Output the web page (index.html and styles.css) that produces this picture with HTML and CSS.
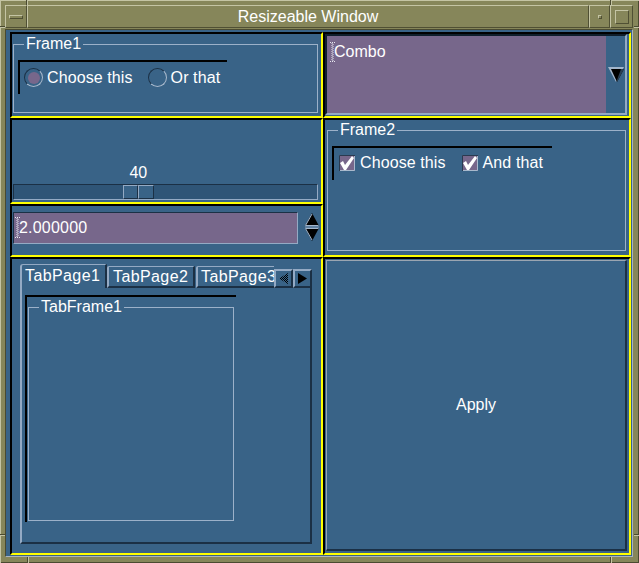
FILE: index.html
```html
<!DOCTYPE html>
<html>
<head>
<meta charset="utf-8">
<title>Resizeable Window</title>
<link rel="stylesheet" href="styles.css">
</head>
<body>
<div class="window">
  <span class="mark mv" style="left:26px;top:0;height:5px"></span>
  <span class="mark mv" style="left:610px;top:0;height:5px"></span>
  <span class="mark mv" style="left:27px;top:557px;height:6px"></span>
  <span class="mark mv" style="left:610px;top:557px;height:6px"></span>
  <span class="mark mh" style="left:0;top:26px;width:5px"></span>
  <span class="mark mh" style="left:634px;top:26px;width:5px"></span>
  <span class="mark mh" style="left:0;top:534px;width:5px"></span>
  <span class="mark mh" style="left:634px;top:534px;width:5px"></span>

  <div class="titlebar">
    <div class="tb-btn tb-menu"><span class="tb-dash"></span></div>
    <div class="tb-title">Resizeable Window</div>
    <div class="tb-btn tb-min"><span class="tb-dot"></span></div>
    <div class="tb-btn tb-max"><span class="tb-square"></span></div>
  </div>

  <div class="client">
    <div class="grid">
      <div class="cell">
        <fieldset class="frame frame1">
          <legend>Frame1</legend>
          <div class="group group-radio">
            <label class="opt opt-radio"><span class="radio on"></span>Choose this</label>
            <label class="opt opt-radio"><span class="radio"></span>Or that</label>
          </div>
        </fieldset>
      </div>

      <div class="cell">
        <div class="combo">
          <div class="combo-entry">
            <svg class="ibeam" width="5" height="20" viewBox="0 0 5 20"><path d="M0 0.5h5M0 19.5h5" stroke="#e6e6ee" stroke-dasharray="1 1"/><path d="M2 1v18" stroke="#e6e6ee" stroke-dasharray="1 1"/><path d="M3 1v18" stroke="#e6e6ee" stroke-dasharray="1 1" stroke-dashoffset="1"/></svg>
            <span>Combo</span>
          </div>
          <div class="combo-btn">
            <svg width="16" height="15" viewBox="0 0 16 15"><polygon points="0,0 16,0 8,15" fill="#a3b6cc"/><polygon points="3,2 16,2 9,15" fill="#000"/><polygon points="13,2 16,2 9,15 9,13" fill="#2a3e52"/></svg>
          </div>
        </div>
      </div>

      <div class="stack">
        <div class="cell slider-cell">
          <div class="slider" style="--v:0.4">
            <div class="slider-label">40</div>
            <div class="trough"><div class="thumb"><span></span><span></span></div></div>
          </div>
        </div>
        <div class="cell spin-cell">
          <div class="spin-entry">
            <svg class="ibeam" width="5" height="21" viewBox="0 0 5 21"><path d="M0 0.5h5M0 20.5h5" stroke="#e6e6ee" stroke-dasharray="1 1"/><path d="M2 1v19" stroke="#e6e6ee" stroke-dasharray="1 1"/><path d="M3 1v19" stroke="#e6e6ee" stroke-dasharray="1 1" stroke-dashoffset="1"/></svg>
            <span class="spin-text">2.000000</span>
          </div>
          <svg class="spin-arrows" width="14" height="28" viewBox="0 0 14 28"><polygon points="7,0 14,13 0,13" fill="#000"/><path d="M7 1 L0.5 12.5 H13.5" stroke="#a3b6cc" fill="none"/><rect x="0" y="13" width="14" height="2" fill="#5f7f9f"/><polygon points="0,15 14,15 7,28" fill="#000"/><path d="M0.5 15.5 H13.5 M0.5 15.5 L7 27" stroke="#a3b6cc" fill="none"/></svg>
        </div>
      </div>

      <div class="cell">
        <fieldset class="frame frame2">
          <legend>Frame2</legend>
          <div class="group group-check">
            <label class="opt opt-check">
              <svg width="16" height="16" viewBox="0 0 16 16"><rect width="16" height="16" fill="#77678b"/><path d="M0.5 16V0.5H16" stroke="#2a3a50" fill="none"/><path d="M15.5 1V15.5H1" stroke="#a9b9cc" fill="none"/><polygon points="1,8 4,6 6,10 13,1 15,3 7,15 5,15" fill="#fff"/></svg>
              Choose this</label>
            <label class="opt opt-check">
              <svg width="16" height="16" viewBox="0 0 16 16"><rect width="16" height="16" fill="#77678b"/><path d="M0.5 16V0.5H16" stroke="#2a3a50" fill="none"/><path d="M15.5 1V15.5H1" stroke="#a9b9cc" fill="none"/><polygon points="1,8 4,6 6,10 13,1 15,3 7,15 5,15" fill="#fff"/></svg>
              And that</label>
          </div>
        </fieldset>
      </div>

      <div class="cell">
        <div class="tabs">
          <div class="tabrow">
            <div class="tab tab-sel">TabPage1</div>
            <div class="tab tab-2">TabPage2</div>
            <div class="tab tab-3">TabPage3</div>
            <div class="tab-arrow">
              <svg width="9" height="11" viewBox="0 0 9 11"><defs><pattern id="dith" width="2" height="2" patternUnits="userSpaceOnUse"><rect width="1" height="1" fill="#000"/><rect x="1" y="1" width="1" height="1" fill="#000"/></pattern></defs><polygon points="9,0 9,11 0,5.5" fill="url(#dith)"/></svg>
            </div>
            <div class="tab-arrow">
              <svg width="9" height="11" viewBox="0 0 9 11"><polygon points="0,0 0,11 9,5.5" fill="#000"/></svg>
            </div>
          </div>
          <div class="tabpanel">
            <div class="tabframe-box">
              <fieldset class="frame tabframe">
                <legend>TabFrame1</legend>
              </fieldset>
            </div>
          </div>
        </div>
      </div>

      <div class="cell">
        <div class="apply">Apply</div>
      </div>
    </div>
  </div>
</div>
</body>
</html>
```

FILE: styles.css
```css
* { box-sizing: border-box; }
html, body { margin: 0; padding: 0; }
body {
  width: 639px;
  height: 563px;
  overflow: hidden;
  background: #86865a;
  font-family: "Liberation Sans", Arial, sans-serif;
  font-size: 16px;
  color: #ffffff;
}

.window {
  position: relative;
  width: 639px;
  height: 563px;
  background: #86865a;
  padding: 5px 6px 6px 5px;
  box-shadow: inset 1px 1px #c4c4a4, inset -1px -1px #4a4a30;
  display: flex;
  flex-direction: column;
}

.mark { position: absolute; display: block; }
.mv { width: 2px; border-left: 1px solid #4a4a30; border-right: 1px solid #c4c4a4; }
.mh { height: 2px; border-top: 1px solid #4a4a30; border-bottom: 1px solid #c4c4a4; }

/* title bar */
.titlebar { display: flex; height: 23px; margin-bottom: 1px; }
.tb-btn, .tb-title {
  border: 1px solid;
  border-color: #c4c4a4 #505034 #505034 #c4c4a4;
  background: #86865a;
}
.tb-menu { width: 22px; display: flex; align-items: center; justify-content: center; }
.tb-dash {
  width: 14px; height: 4px;
  border: 1px solid; border-color: #c4c4a4 #505034 #505034 #c4c4a4;
}
.tb-title {
  flex: 1;
  text-align: center;
  font-size: 16px;
  line-height: 21px;
  color: #ffffff;
}
.tb-min { width: 21px; display: flex; align-items: center; justify-content: center; }
.tb-dot {
  width: 4px; height: 4px;
  border: 1px solid; border-color: #c4c4a4 #505034 #505034 #c4c4a4;
}
.tb-max { width: 23px; display: flex; align-items: center; justify-content: center; }
.tb-square {
  width: 14px; height: 14px;
  border: 1px solid; border-color: #c4c4a4 #505034 #505034 #c4c4a4;
}

/* client */
.client {
  height: 528px;
  background: #396387;
  border: 1px solid;
  border-color: #4a4a30 #a9b4bf #a9b4bf #4a4a30;
  padding: 2px 1px 1px 4px;
}
.grid {
  display: grid;
  grid-template-columns: 313px 308px;
  grid-template-rows: 86px 139px 298px;
}
.stack { display: grid; grid-template-rows: 86px 53px; }
.cell {
  border-style: solid;
  border-width: 2px;
  border-color: #000000 #ffff00 #ffff00 #000000;
  min-width: 0;
  min-height: 0;
}

/* frames */
.frame {
  margin: 0;
  padding: 0 0 0 4px;
  border: 1px solid #9cb1c9;
  min-width: 0;
}
.frame legend {
  margin-left: 6px;
  padding: 0 2px;
  font-size: 16px;
  line-height: 16px;
}
.frame1 { margin: 2px 0 0 1px; width: 305px; height: 77px; }
.frame2 { margin: 2px 0 0 2px; width: 299px; height: 129px; }

.group {
  border-top: 2px solid #000;
  border-left: 2px solid #000;
  height: 34px;
  display: flex;
  align-items: flex-start;
}
.group-radio { margin-top: 8px; width: 209px; padding: 6px 0 0 4px; }
.group-check { margin-top: 8px; width: 220px; padding: 7px 0 0 5px; }

.opt { display: flex; align-items: center; white-space: nowrap; letter-spacing: 0.1px; }
.opt-radio { gap: 4px; margin-right: 15px; line-height: 19px; height: 19px; }
.opt-check { gap: 5px; margin-right: 16px; line-height: 16px; height: 16px; }

.radio {
  width: 19px; height: 19px;
  border-radius: 50%;
  border: 1px solid;
  border-color: #1b3045 #a9b9cc #a9b9cc #1b3045;
  display: flex; align-items: center; justify-content: center;
}
.radio.on::after {
  content: "";
  width: 12px; height: 12px;
  border-radius: 50%;
  background: #77678b;
}

/* combo */
.combo {
  width: 302px;
  height: 81px;
  border: 2px solid;
  border-color: #0f1e2b #94aac4 #94aac4 #0f1e2b;
  display: flex;
}
.combo-entry {
  flex: 1;
  background: #77678b;
  padding: 6px 0 0 3px;
  display: flex;
  align-items: flex-start;
  line-height: 20px;
}
.combo-entry span { margin-left: -1px; }
.combo-btn {
  width: 19px;
  display: flex;
  align-items: center;
  justify-content: center;
}
.ibeam { display: block; flex: none; }

/* slider */
.slider-cell {
  display: flex;
  flex-direction: column;
  justify-content: flex-end;
  padding-bottom: 2px;
}
.slider { width: 305px; margin-left: 1px; }
.slider-label {
  width: 31px;
  margin-left: calc((100% - 33px) * var(--v) + 1px);
  margin-bottom: 3px;
  text-align: center;
  line-height: 16px;
}
.trough {
  height: 16px;
  border: 1px solid;
  border-color: #1b3045 #94aac4 #94aac4 #1b3045;
  background: #2f5577;
}
.thumb {
  display: flex;
  width: 31px;
  height: 14px;
  margin-left: calc((100% - 31px) * var(--v));
}
.thumb span {
  flex: 1;
  border: 1px solid;
  border-color: #94aac4 #1b3045 #1b3045 #94aac4;
  background: #396387;
}

/* spin */
.spin-cell {
  display: flex;
  align-items: flex-start;
  padding: 6px 0 0 1px;
  gap: 7px;
}
.spin-entry {
  width: 285px;
  height: 32px;
  border: 1px solid;
  border-color: #1b3045 #94aac4 #94aac4 #1b3045;
  background: #77678b;
  display: flex;
  align-items: flex-start;
  padding: 4px 0 0 1px;
  line-height: 21px;
}
.spin-text { margin-left: -1px; letter-spacing: 0.2px; }
.spin-arrows { display: block; margin-top: 1px; }

/* tabs */
.tabs {
  margin: 5px 0 0 8px;
  width: 292px;
  height: 280px;
  display: flex;
  flex-direction: column;
}
.tabrow { display: flex; align-items: flex-end; height: 24px; }
.tab {
  border-style: solid;
  border-color: #94aac4 #1b3045 #1b3045 #94aac4;
  line-height: 20px;
  white-space: nowrap;
  overflow: hidden;
  letter-spacing: 0.4px;
}
.tab-sel {
  width: 87px; height: 24px;
  border-width: 1px 2px 0 2px;
  padding: 1px 0 0 3px;
  border-top-left-radius: 3px;
}
.tab-2 {
  width: 88px; height: 22px;
  border-width: 1px 2px 2px 2px;
  padding-left: 4px;
  border-top-left-radius: 2px;
}
.tab-3 {
  flex: 1;
  margin-left: 1px;
  height: 22px;
  border-width: 1px 0 2px 2px;
  padding-left: 3px;
  border-top-left-radius: 2px;
}
.tab-arrow {
  width: 19px; height: 19px;
  border: 2px solid;
  border-color: #94aac4 #1b3045 #1b3045 #94aac4;
  display: flex; align-items: center; justify-content: center;
}
.tabpanel {
  flex: 1;
  border-style: solid;
  border-width: 0 2px 2px 2px;
  border-color: #94aac4 #1b3045 #1b3045 #94aac4;
  padding: 7px 0 0 3px;
}
.tabframe-box {
  width: 211px;
  height: 227px;
  border-top: 2px solid #000;
  border-left: 2px solid #000;
  padding: 2px 0 0 1px;
}
.tabframe { width: 206px; height: 222px; }

/* apply */
.apply {
  margin: 1px 0 0 1px;
  width: 301px;
  height: 291px;
  border-style: solid;
  border-width: 1px 2px 2px 1px;
  border-color: #9aa5b1 #1b3045 #1b3045 #9aa5b1;
  display: flex;
  align-items: center;
  justify-content: center;
}
```
